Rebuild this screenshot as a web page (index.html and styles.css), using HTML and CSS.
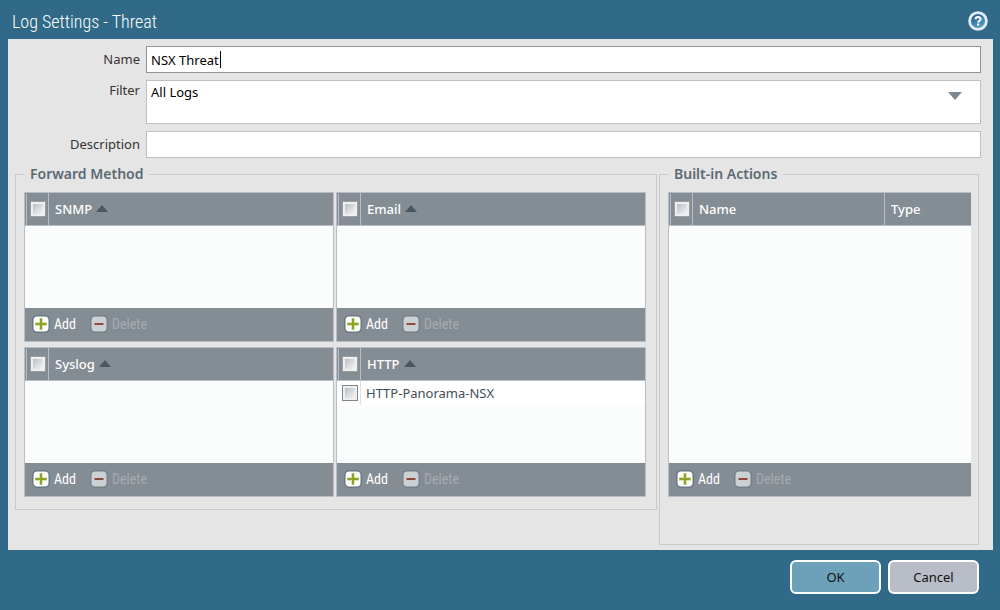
FILE: index.html
```html
<!DOCTYPE html>
<html lang="en">
<head>
<meta charset="utf-8">
<title>Log Settings - Threat</title>
<link rel="stylesheet" href="styles.css">
</head>
<body>
<svg class="sprite" aria-hidden="true">
  <defs>
    <linearGradient id="help-fill" x1="0" y1="0" x2="0.6" y2="1">
      <stop offset="0" stop-color="#1d4f7c"/>
      <stop offset="1" stop-color="#5aa3cf"/>
    </linearGradient>
    <symbol id="icon-add" viewBox="0 0 18 18">
      <rect x="0.75" y="0.75" width="16.5" height="16.5" rx="4.5" fill="#fff" stroke="#667885" stroke-width="1.5"/>
      <path d="M3 9H15M9 3V15" stroke="#cfdc9c" stroke-width="3.4"/>
      <path d="M3.5 9H14.5M9 3.5V14.5" stroke="#8aa325" stroke-width="2"/>
    </symbol>
    <symbol id="icon-delete" viewBox="0 0 18 18">
      <rect x="0.75" y="0.75" width="16.5" height="16.5" rx="4.5" fill="#cdd0d3" stroke="#72818c" stroke-width="1.5"/>
      <path d="M4.5 9H13.5" stroke="#8c4a3c" stroke-width="2"/>
    </symbol>
    <symbol id="icon-sort" viewBox="0 0 12 7">
      <path d="M6 0L12 7H0Z" fill="#4b5861"/>
    </symbol>
  </defs>
</svg>
<form class="dialog">
  <header class="titlebar">
    <h1 class="title">Log Settings - Threat</h1>
    <button class="help" type="button" aria-label="Help">
      <svg width="20" height="20" viewBox="0 0 20 20">
        <circle cx="10" cy="10" r="8.4" fill="url(#help-fill)" stroke="#e2ecf5" stroke-width="2.8"/>
        <path d="M7.6 8.2C7.6 5.2 12.6 5.4 12.6 8C12.6 9.8 10.3 9.7 10.1 11.6" fill="none" stroke="#fff" stroke-width="2"/>
        <rect x="9" y="12.6" width="2.2" height="2" fill="#fff"/>
      </svg>
    </button>
  </header>

  <main class="content">
    <div class="fields">
      <label class="label" for="name">Name</label>
      <div class="field">
        <input class="box box-active" id="name" type="text" value="NSX Threat">
        <span class="caret"></span>
      </div>
      <label class="label label-top" for="filter">Filter</label>
      <div class="field">
        <select class="box box-select" id="filter"><option>All Logs</option></select>
        <svg class="arrow" width="14" height="8" viewBox="0 0 14 8"><path d="M0 0H14L7 8Z" fill="#7d8890"/></svg>
      </div>
      <label class="label" for="description">Description</label>
      <div class="field">
        <input class="box" id="description" type="text">
      </div>
    </div>

    <div class="groups">
      <fieldset class="group group-forward">
        <legend class="legend">Forward Method</legend>
        <div class="panels">
          <section class="panel">
            <div class="grid-area">
              <table class="grid">
                <thead><tr><th class="pick"><input class="check" type="checkbox" aria-label="Select all SNMP"></th><th>SNMP <svg class="sort"><use href="#icon-sort"/></svg></th></tr></thead>
              </table>
            </div>
            <div class="toolbar">
              <button class="tool" type="button"><svg class="tool-icon"><use href="#icon-add"/></svg>Add</button>
              <button class="tool" type="button" disabled><svg class="tool-icon"><use href="#icon-delete"/></svg>Delete</button>
            </div>
          </section>
          <section class="panel">
            <div class="grid-area">
              <table class="grid">
                <thead><tr><th class="pick"><input class="check" type="checkbox" aria-label="Select all Email"></th><th>Email <svg class="sort"><use href="#icon-sort"/></svg></th></tr></thead>
              </table>
            </div>
            <div class="toolbar">
              <button class="tool" type="button"><svg class="tool-icon"><use href="#icon-add"/></svg>Add</button>
              <button class="tool" type="button" disabled><svg class="tool-icon"><use href="#icon-delete"/></svg>Delete</button>
            </div>
          </section>
          <section class="panel">
            <div class="grid-area">
              <table class="grid">
                <thead><tr><th class="pick"><input class="check" type="checkbox" aria-label="Select all Syslog"></th><th>Syslog <svg class="sort"><use href="#icon-sort"/></svg></th></tr></thead>
              </table>
            </div>
            <div class="toolbar">
              <button class="tool" type="button"><svg class="tool-icon"><use href="#icon-add"/></svg>Add</button>
              <button class="tool" type="button" disabled><svg class="tool-icon"><use href="#icon-delete"/></svg>Delete</button>
            </div>
          </section>
          <section class="panel">
            <div class="grid-area">
              <table class="grid">
                <thead><tr><th class="pick"><input class="check" type="checkbox" aria-label="Select all HTTP"></th><th>HTTP <svg class="sort"><use href="#icon-sort"/></svg></th></tr></thead>
                <tbody><tr><td class="pick"><input class="check check-row" type="checkbox" id="http-1"></td><td><label for="http-1">HTTP-Panorama-NSX</label></td></tr></tbody>
              </table>
            </div>
            <div class="toolbar">
              <button class="tool" type="button"><svg class="tool-icon"><use href="#icon-add"/></svg>Add</button>
              <button class="tool" type="button" disabled><svg class="tool-icon"><use href="#icon-delete"/></svg>Delete</button>
            </div>
          </section>
        </div>
      </fieldset>

      <fieldset class="group group-actions">
        <legend class="legend">Built-in Actions</legend>
        <section class="panel panel-tall">
          <div class="grid-area">
            <table class="grid">
              <thead><tr><th class="pick"><input class="check" type="checkbox" aria-label="Select all actions"></th><th>Name</th><th class="type">Type</th></tr></thead>
            </table>
          </div>
          <div class="toolbar">
            <button class="tool" type="button"><svg class="tool-icon"><use href="#icon-add"/></svg>Add</button>
            <button class="tool" type="button" disabled><svg class="tool-icon"><use href="#icon-delete"/></svg>Delete</button>
          </div>
        </section>
      </fieldset>
    </div>
  </main>

  <footer class="footer">
    <button class="button button-primary" type="submit">OK</button>
    <button class="button" type="button">Cancel</button>
  </footer>
</form>
</body>
</html>
```
FILE: styles.css
```css
* {
  box-sizing: border-box;
}

body {
  margin: 0;
  background: #306a88;
  font: 13px/20px "Noto Sans", "Open Sans", sans-serif;
  color: #333;
}

button,
input,
select {
  font: inherit;
}

.sprite {
  position: absolute;
  width: 0;
  height: 0;
}

.dialog {
  display: flex;
  flex-direction: column;
  min-height: 100vh;
  padding: 0 7px 0 8px;
}

.titlebar {
  display: flex;
  align-items: center;
  justify-content: space-between;
  height: 39px;
  padding: 2px 5px 0 4px;
}

.title {
  margin: 0;
  padding-top: 2px;
  font: 300 18px/24px "Roboto Condensed", Roboto, sans-serif;
  color: #fff;
}

.help {
  display: flex;
  padding: 0;
  border: 0;
  background: none;
}

.content {
  flex: 1;
  padding: 7px 12px 4px 7px;
  background: #e5e5e5;
}

.fields {
  display: grid;
  grid-template-columns: 125px 1fr;
  gap: 7px 6px;
}

.label {
  padding-top: 3px;
  text-align: right;
}

.label-top {
  padding-top: 0;
}

.field {
  position: relative;
  display: flex;
}

.box {
  width: 100%;
  height: 27px;
  padding: 0 4px;
  border: 1px solid #c0c0c0;
  border-radius: 0;
  outline: 0;
  background: #fff;
  color: #000;
}

.box-active {
  border-color: #949494;
}

.box-select {
  height: 44px;
  padding-bottom: 20px;
  appearance: none;
}

.caret {
  position: absolute;
  top: 5px;
  left: 74px;
  width: 1px;
  height: 17px;
  background: #000;
}

.arrow {
  position: absolute;
  top: 12px;
  right: 19px;
  pointer-events: none;
}

.groups {
  display: grid;
  grid-template-columns: 642fr 320fr;
  align-items: start;
  gap: 2px;
  margin-top: 6px;
  padding-right: 2px;
}

.group {
  min-width: 0;
  margin: 0;
  padding: 8px 10px 12px 8px;
  border: 1px solid #c9cacc;
}

.group-actions {
  padding: 8px 7px 47px 8px;
}

.legend {
  padding: 0 6px;
  font-size: 14px;
  font-weight: 600;
  color: #5b6a74;
}

.panels {
  display: grid;
  grid-template-columns: 1fr 1fr;
  gap: 5px 2px;
}

.panel {
  display: flex;
  flex-direction: column;
  height: 150px;
  border: 1px solid #b9bdc8;
}

.panel-tall {
  height: 305px;
  border-right: 0;
}

.grid-area {
  flex: 1;
  background: #fbfdfd;
}

.grid {
  width: 100%;
  border-spacing: 0;
  table-layout: fixed;
}

.grid th {
  height: 33px;
  padding: 0 6px;
  border-bottom: 1px solid #b9bdc8;
  background: #858d94;
  font-weight: 500;
  text-align: left;
  color: #fff;
}

.grid .pick {
  width: 24px;
  padding: 0 0 0 5px;
  border-right: 1px solid #b9bdc8;
  line-height: 0;
}

.grid th.pick {
  background: linear-gradient(#b9bdc8, #b9bdc8) 1px 1px / 1px 100% no-repeat #858d94;
}

.grid td {
  height: 24px;
  padding: 0 5px;
  background: #fff;
  color: #3f4e57;
}

.grid td.pick {
  border-right-color: #dfe0e3;
}

.grid .type {
  width: 87px;
  border-left: 1px solid #b9bdc8;
}

.check {
  width: 16px;
  height: 16px;
  margin: 0;
  padding: 2px;
  border: 1px solid #9a9ea1;
  appearance: none;
  background: linear-gradient(135deg, #b9bfc7, #f4f4f4) content-box, #efefef;
}

.check-row {
  border-color: #808589;
}

.sort {
  width: 12px;
  height: 7px;
  margin: 0 0 2px 1px;
}

.toolbar {
  display: flex;
  align-items: center;
  gap: 14px;
  height: 33px;
  padding: 0 7px 2px;
  background: #858d94;
}

.tool {
  display: flex;
  align-items: center;
  gap: 4px;
  height: 18px;
  padding: 0;
  border: 0;
  background: none;
  font: 14px/18px "Roboto Condensed", Roboto, sans-serif;
  color: #fff;
}

.tool:disabled {
  color: #a5abb1;
}

.tool-icon {
  width: 18px;
  height: 18px;
}

.footer {
  display: flex;
  justify-content: flex-end;
  gap: 7px;
  padding: 10px 14px 16px 0;
}

.button {
  width: 91px;
  height: 34px;
  padding: 0;
  border: 2px solid #fff;
  border-radius: 6px;
  background: #b9bdc7;
  color: #111;
}

.button-primary {
  background: #6ca1b9;
}
```
